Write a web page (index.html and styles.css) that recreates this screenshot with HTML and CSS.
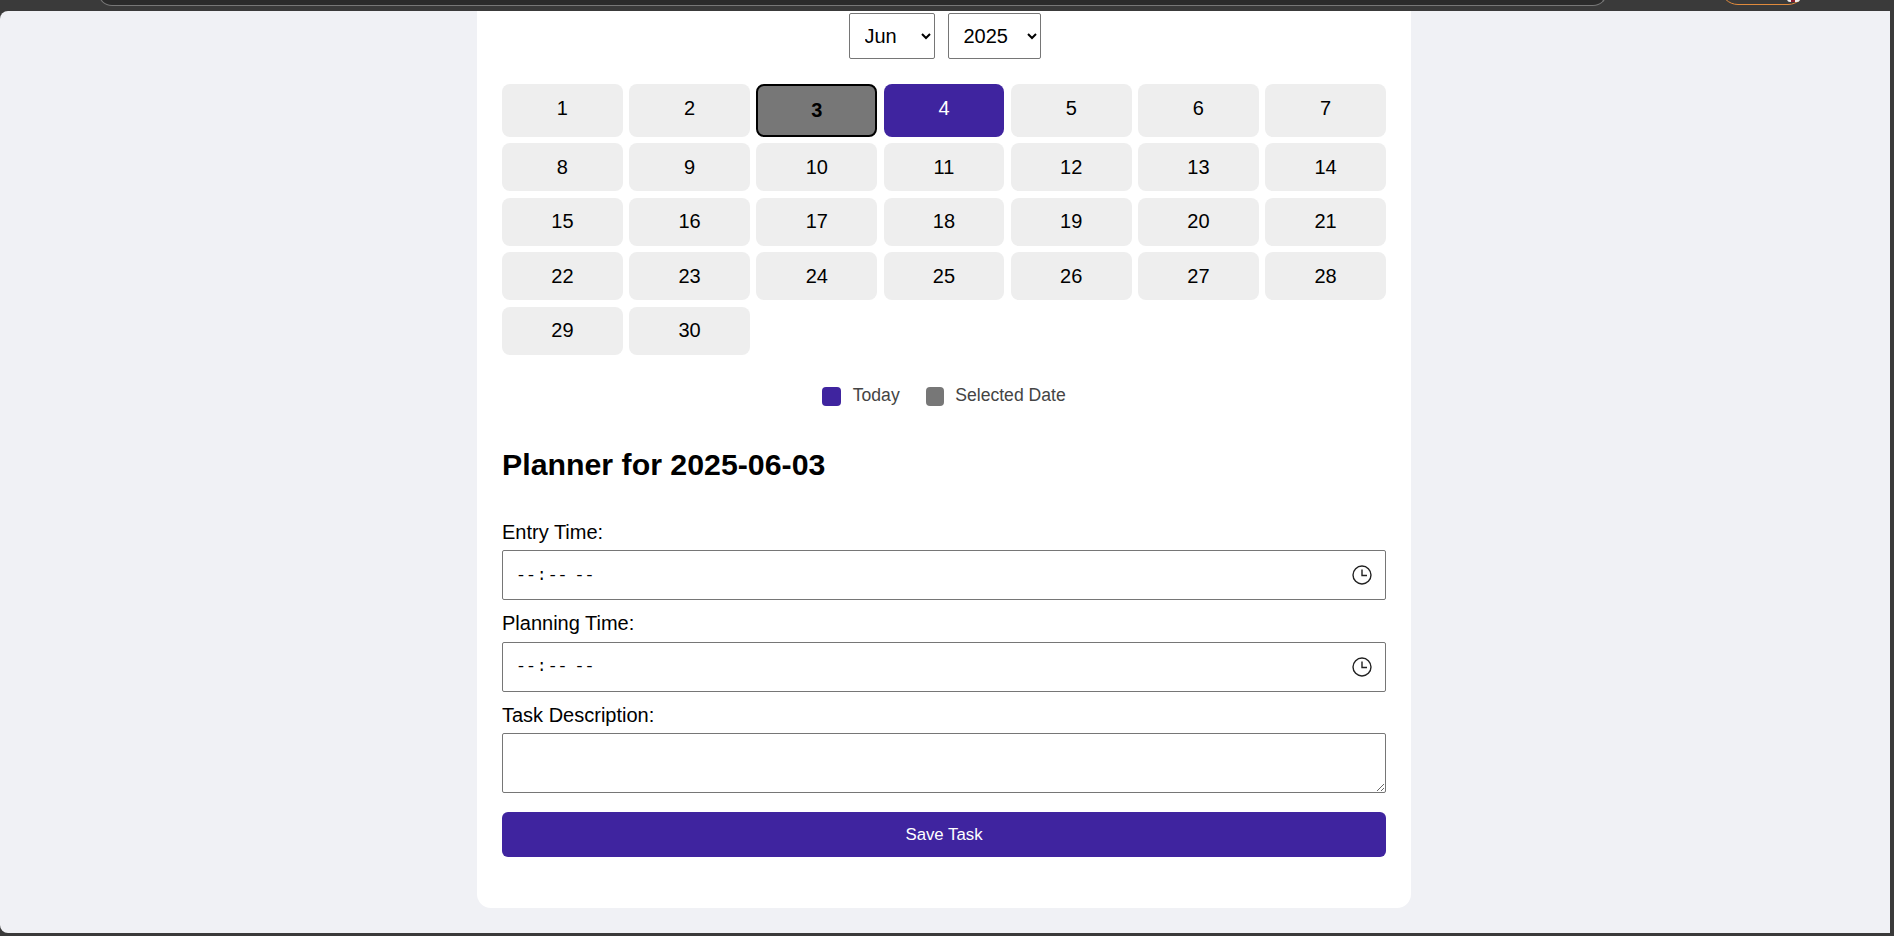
FILE: index.html
```html
<!DOCTYPE html>
<html>
<head>
	<meta charset="utf-8">
	<title>Planner</title>
	<link rel="stylesheet" href="styles.css">
</head>
<body>
<div class="topbar">
	<div class="address"></div>
	<div class="profile"><span class="avatar"></span></div>
</div>
<div class="page">
	<div class="card">
		<div class="pickers">
			<select class="month"><option>Jun</option></select>
			<select class="year"><option>2025</option></select>
		</div>
		<div class="days">
			<div class="day">1</div>
			<div class="day">2</div>
			<div class="day selected">3</div>
			<div class="day today">4</div>
			<div class="day">5</div>
			<div class="day">6</div>
			<div class="day">7</div>
			<div class="day">8</div>
			<div class="day">9</div>
			<div class="day">10</div>
			<div class="day">11</div>
			<div class="day">12</div>
			<div class="day">13</div>
			<div class="day">14</div>
			<div class="day">15</div>
			<div class="day">16</div>
			<div class="day">17</div>
			<div class="day">18</div>
			<div class="day">19</div>
			<div class="day">20</div>
			<div class="day">21</div>
			<div class="day">22</div>
			<div class="day">23</div>
			<div class="day">24</div>
			<div class="day">25</div>
			<div class="day">26</div>
			<div class="day">27</div>
			<div class="day">28</div>
			<div class="day">29</div>
			<div class="day">30</div>
		</div>
		<div class="legend">
			<span class="swatch swatch-today"></span><span class="legend-text">Today</span>
			<span class="swatch swatch-selected"></span><span class="legend-text">Selected Date</span>
		</div>
		<h2>Planner for 2025-06-03</h2>
		<form>
			<label for="entry">Entry Time:</label>
			<input id="entry" type="time">
			<label for="planning">Planning Time:</label>
			<input id="planning" type="time">
			<label for="task">Task Description:</label>
			<textarea id="task"></textarea>
			<button type="button">Save Task</button>
		</form>
	</div>
</div>
</body>
</html>
```

FILE: styles.css
```css
body{
	margin: 0;
	height: 936px;
	overflow: hidden;
	background: #3a3a3a;
	font-family: "Liberation Sans",Arial,sans-serif;
	font-size: 20px;
	color: #000;
}
.topbar{
	display: flex;
	height: 11px;
	padding-left: 98px;
	overflow: hidden;
}
.address{
	flex: none;
	box-sizing: border-box;
	width: 1509px;
	height: 14px;
	margin-top: -8px;
	background: #2b2b2b;
	border: 1px solid #777;
	border-radius: 0 0 14px 14px;
}
.profile{
	flex: none;
	display: flex;
	justify-content: flex-end;
	align-items: flex-end;
	box-sizing: border-box;
	width: 86px;
	height: 36px;
	margin: -31px 0 0 113px;
	padding: 0 5px 2px;
	border: 1px solid #e08a3c;
	border-radius: 18px;
}
.avatar{
	width: 13px;
	height: 3px;
	background: linear-gradient(90deg,#eee 0 30%,#8a1c2c 30% 60%,#eee 60%);
	border-radius: 0 0 6px 6px;
}
.page{
	display: flex;
	justify-content: center;
	height: 897px;
	width: 1888px;
	padding: 0 2px 25px 0;
	background: #f0f1f5;
	border-radius: 8px 0 0 8px;
}
.card{
	width: 884px;
	padding: 2px 25px 0;
	background: #fff;
	border-radius: 0 0 14px 14px;
}
.pickers{
	display: flex;
	justify-content: center;
	gap: 13px;
	margin-left: 1px;
}
select{
	box-sizing: border-box;
	height: 46px;
	padding: 0 4px 0 11px;
	font-family: "Liberation Sans",Arial,sans-serif;
	font-size: 20px;
	background: #fff;
	border: 1px solid #767676;
	border-radius: 2px;
}
.month{
	width: 86px;
}
.year{
	width: 93px;
}
.days{
	display: grid;
	grid-template-columns: repeat(7,1fr);
	gap: 6.4px;
	margin-top: 25px;
}
.day{
	padding: 12.5px 0;
	text-align: center;
	background: #eee;
	border-radius: 8px;
}
.today{
	background: #3f249f;
	color: #fff;
}
.selected{
	padding: 13px 0;
	font-weight: bold;
	background: #777;
	border: 2px solid #000;
}
.legend{
	display: flex;
	justify-content: center;
	align-items: center;
	margin-top: 30.4px;
	font-size: 17.6px;
	color: #444;
}
.swatch{
	width: 19px;
	height: 19px;
	border-radius: 4px;
}
.swatch-today{
	background: #3f249f;
}
.swatch-selected{
	width: 18px;
	background: #777;
}
.legend-text{
	margin: 0 26px 0 11.5px;
	padding-bottom: 2px;
}
.legend-text:last-child{
	margin-right: 0;
}
h2{
	margin: 40px 0 39px;
	font-size: 30.3px;
	line-height: 34px;
}
label{
	display: block;
	margin-bottom: 6.5px;
}
input{
	display: block;
	box-sizing: border-box;
	width: 100%;
	height: 50px;
	margin-bottom: 12px;
	padding: 0 12px;
	font-family: "Liberation Mono",monospace;
	font-size: 16.5px;
	background: #fff;
	border: 1px solid #767676;
	border-radius: 2px;
}
input::-webkit-calendar-picker-indicator{
	width: 20px;
	height: 20px;
	padding: 0;
	margin-right: 1.5px;
	background-image: url("data:image/svg+xml,%3Csvg xmlns='http://www.w3.org/2000/svg' viewBox='0 0 20 20'%3E%3Ccircle cx='10' cy='10' r='9' fill='none' stroke='%23222' stroke-width='1.4'/%3E%3Cpath d='M10 4.5V10.5H15' fill='none' stroke='%23222' stroke-width='1.4'/%3E%3C/svg%3E");
}
textarea{
	display: block;
	box-sizing: border-box;
	width: 100%;
	height: 60px;
	margin-bottom: 19px;
	background: #fff;
	border: 1px solid #767676;
	border-radius: 2px;
}
button{
	display: block;
	width: 100%;
	height: 45px;
	font-family: "Liberation Sans",Arial,sans-serif;
	font-size: 16.8px;
	color: #fff;
	background: #3f249f;
	border: 0;
	border-radius: 6px;
}
```
